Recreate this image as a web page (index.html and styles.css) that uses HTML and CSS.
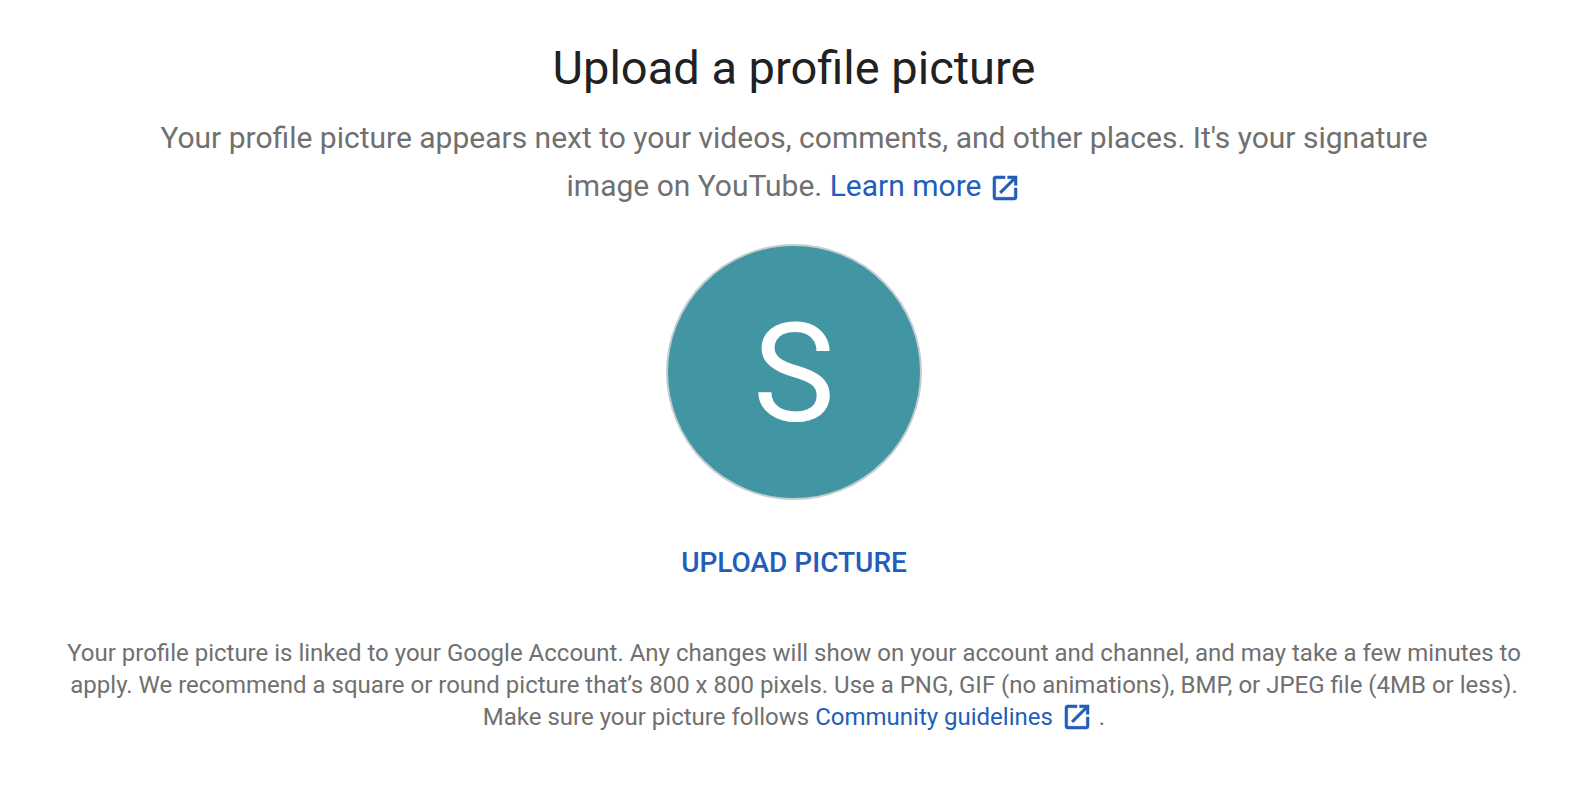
FILE: index.html
```html
<!DOCTYPE html>
<html lang="en">
<head>
    <meta charset="UTF-8">
    <meta name="viewport" content="width=device-width, initial-scale=1.0">
    <title>Upload a profile picture</title>
    <link rel="stylesheet" href="styles.css">
</head>
<body>
    <main class="upload">
        <h1 class="title">Upload a profile picture</h1>
        <p class="intro">
            Your profile picture appears next to your videos, comments, and other places. It's your signature image on YouTube.
            <a class="link" href="#learn-more">Learn more<svg class="icon" viewBox="0 0 24 24" aria-hidden="true"><path d="M19 19H5V5h7V3H5a2 2 0 0 0-2 2v14a2 2 0 0 0 2 2h14a2 2 0 0 0 2-2v-7h-2v7zM14 3v2h3.590l-9.830 9.830 1.410 1.410L19 6.410V10h2V3h-7z"/></svg></a>
        </p>
        <div class="avatar">S</div>
        <button class="upload-button" type="button">UPLOAD PICTURE</button>
        <p class="notes">
            Your profile picture is linked to your Google Account. Any changes will show on your account and channel, and may take a few minutes to apply. We recommend a square or round picture that’s 800 x 800 pixels. Use a PNG, GIF (no animations), BMP, or JPEG file (4MB or less). Make sure your picture follows
            <a class="link" href="#guidelines">Community guidelines<svg class="icon" viewBox="0 0 24 24" aria-hidden="true"><path d="M19 19H5V5h7V3H5a2 2 0 0 0-2 2v14a2 2 0 0 0 2 2h14a2 2 0 0 0 2-2v-7h-2v7zM14 3v2h3.590l-9.830 9.830 1.410 1.410L19 6.410V10h2V3h-7z"/></svg></a> .
        </p>
    </main>
</body>
</html>
```

FILE: styles.css
```css
body {
    margin: 0;
    background: #fff;
    color: #707070;
    font-family: Roboto, sans-serif;
    text-align: center;
}
.upload {
    display: flex;
    flex-direction: column;
    align-items: center;
    padding: 36px 40px;
}
.title {
    margin: 0;
    color: #212121;
    font-size: 47px;
    font-weight: 400;
    line-height: 64px;
}
.intro {
    max-width: 1320px;
    margin: 14px 0 34px;
    font-size: 30px;
    line-height: 48px;
}
.link {
    color: #235dba;
    text-decoration: none;
}
.icon {
    width: 32px;
    height: 32px;
    margin-left: 8px;
    fill: currentColor;
    stroke: currentColor;
    stroke-width: 0.4;
    vertical-align: -8px;
}
.avatar {
    box-sizing: border-box;
    width: 256px;
    height: 256px;
    border: 2px solid #c4cdd0;
    border-radius: 50%;
    background: #4296a3;
    color: #fff;
    font-size: 138px;
    line-height: 256px;
}
.upload-button {
    margin: 39px 0 50px;
    padding: 0;
    border: 0;
    background: none;
    color: #235dba;
    font: 500 28px/48px Roboto, sans-serif;
    cursor: pointer;
}
.notes {
    max-width: 1508px;
    margin: 0;
    font-size: 24px;
    line-height: 32px;
}
```
